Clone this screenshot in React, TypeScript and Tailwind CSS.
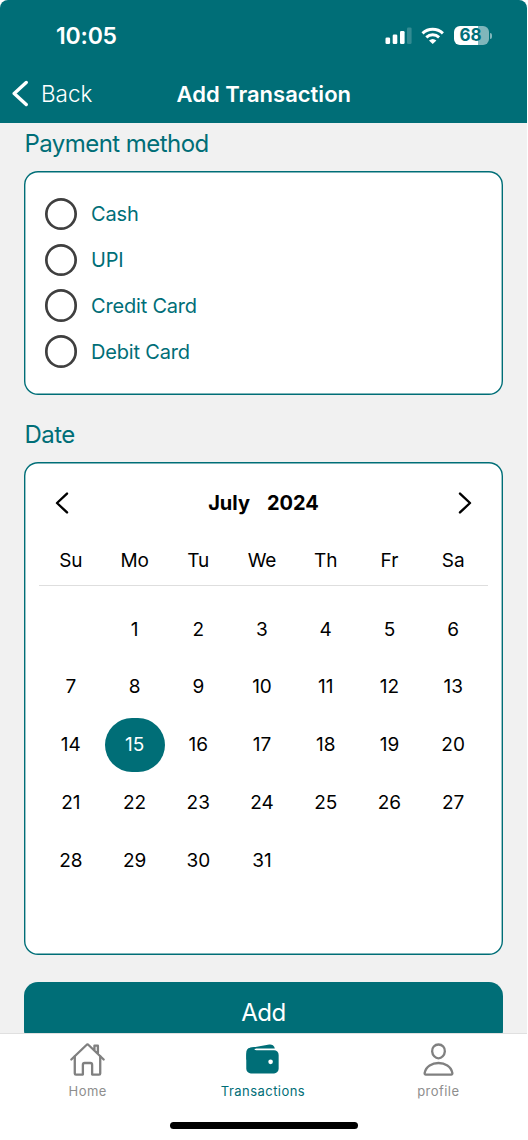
import type { ReactNode } from "react";
import { IoHomeOutline, IoPersonOutline, IoWallet } from "react-icons/io5";

const methods = ["Cash", "UPI", "Credit Card", "Debit Card"];
const weekdays = ["Su", "Mo", "Tu", "We", "Th", "Fr", "Sa"];
const days: (number | null)[] = [null, ...Array.from({ length: 31 }, (_, i) => i + 1)];

function StatusBar() {
  return (
    <div className="flex h-[71px] items-center justify-between pl-[56px] pr-[35px]">
      <span className="pt-[2px] text-[23px] font-semibold leading-none tracking-[-0.2px]">10:05</span>
      <div className="flex items-center">
        <svg width="28" height="18" viewBox="0 0 28 18" fill="currentColor">
          <rect x="0.5" y="10.5" width="4.6" height="6.5" rx="1.3" />
          <rect x="7.7" y="7.5" width="4.6" height="9.5" rx="1.3" />
          <rect x="15" y="4" width="4.6" height="13" rx="1.3" />
          <rect x="22" y="0.5" width="4.6" height="16.5" rx="1.3" opacity="0.2" />
        </svg>
        <svg className="ml-[8px]" width="24" height="18" viewBox="0 0 24 18" fill="none" stroke="currentColor" strokeWidth="3">
          <path d="M1.5 6.3a15 15 0 0 1 20.4 0" />
          <path d="M5.3 10.3a9.6 9.6 0 0 1 12.8 0" />
          <path d="M11.7 17 8 13.6a5.6 5.6 0 0 1 7.4 0z" fill="currentColor" stroke="none" />
        </svg>
        <div className="ml-[9px] flex h-[19px] w-[35px] items-center rounded-[6px] bg-linear-to-r from-white from-68% to-[#80b6bb] to-68% pl-[5.5px]">
          <span className="text-[17px] font-bold leading-none text-[#006e77]">68</span>
        </div>
        <div className="ml-[1px] h-[6px] w-[2px] rounded-r-full bg-[#80b6bb]" />
      </div>
    </div>
  );
}

function Chevron({ flipped = false }: { flipped?: boolean }) {
  return (
    <svg className={flipped ? "rotate-180" : ""} width="14" height="22" viewBox="0 0 14 22" fill="none" stroke="#000" strokeWidth="2.4" strokeLinecap="round" strokeLinejoin="round">
      <path d="M12 1.6 2 11l10 9.4" />
    </svg>
  );
}

function Tab({ icon, label, color, text }: { icon: ReactNode; label: string; color: string; text: string }) {
  return (
    <div className={`flex flex-1 flex-col items-center ${color}`}>
      {icon}
      <span className={`mt-[5px] text-[13px] leading-4 tracking-[0.45px] ${text}`}>{label}</span>
    </div>
  );
}

export default function App() {
  return (
    <div className="h-[1140px] w-[528px] bg-white">
      <div className="flex h-full w-[527px] flex-col overflow-hidden bg-white font-['Inter',sans-serif]">
        <header className="h-[123px] shrink-0 rounded-t-[8px] bg-[#006e77] text-white">
          <StatusBar />
          <div className="flex h-[45px] items-center">
            <div className="flex w-[176.5px] items-center pl-[12px]">
              <svg width="17" height="28" viewBox="0 0 17 28" fill="none" stroke="currentColor" strokeWidth="3.4" strokeLinecap="round" strokeLinejoin="round">
                <path d="M14.2 2.5 2.2 13.5l12 11" />
              </svg>
              <span className="ml-[12px] text-[22.5px] font-light leading-7">Back</span>
            </div>
            <h1 className="text-[22px] font-semibold leading-7">Add Transaction</h1>
          </div>
        </header>

        <main className="min-h-0 flex-1 overflow-hidden bg-[#f1f1f1] px-[24px] pt-[4.5px] text-[#006e77]">
          <h2 className="pl-[0.5px] text-[24px] leading-8 tracking-[-0.55px]">Payment method</h2>
          <section className="mt-[11.5px] flex h-[224px] flex-col rounded-[14px] bg-white pl-[20.5px] pt-[20px] shadow-[inset_0_0_0_1.4px_#006e77]">
            {methods.map((m) => (
              <label key={m} className="flex h-[45.9px] items-center">
                <span className="size-[32.6px] rounded-full shadow-[inset_0_0_0_2.7px_#3f3f3f]" />
                <span className="ml-[14px] text-[20px] leading-6 tracking-[-0.2px]">{m}</span>
              </label>
            ))}
          </section>

          <h2 className="mt-[24px] pl-[0.5px] text-[24px] leading-8 tracking-[-0.55px]">Date</h2>
          <section className="mt-[11px] h-[493px] rounded-[14px] bg-white px-[15px] pt-px text-black shadow-[inset_0_0_0_1.4px_#006e77]">
            <div className="flex h-[79px] items-center justify-between px-[16px]">
              <Chevron />
              <div className="flex gap-[17px] text-[20px] font-bold">
                <span>July</span>
                <span>2024</span>
              </div>
              <Chevron flipped />
            </div>
            <div className="grid h-[44px] grid-cols-7 border-b border-[#dedede] pr-[3px] pt-[7px] text-center text-[19px] leading-6 tracking-[-0.1px]">
              {weekdays.map((d) => (
                <span key={d}>{d}</span>
              ))}
            </div>
            <div className="mt-[15px] grid grid-cols-7 auto-rows-[57.8px] place-items-center pr-[3px] text-[19px]">
              {days.map((d, i) => (
                <span
                  key={i}
                  className={
                    d === 15
                      ? "flex h-[54px] w-[60px] items-center justify-center rounded-[27px] bg-[#006e77] text-white"
                      : "text-center"
                  }
                >
                  {d}
                </span>
              ))}
            </div>
          </section>

          <button className="mt-[27px] block h-[62px] w-full rounded-[14px] bg-[#006e77] text-[24px] leading-8 tracking-[-0.5px] text-white">Add</button>
        </main>

        <nav className="flex h-[107px] shrink-0 flex-col items-center border-t border-[#e0e0e0] bg-white">
          <div className="flex h-[92px] w-full pr-px pt-[7px]">
            <Tab icon={<IoHomeOutline size={37} />} label="Home" color="text-[#808080]" text="text-[#8e8e8e]" />
            <Tab icon={<IoWallet size={37} />} label="Transactions" color="text-[#006e77]" text="text-[#006e77]" />
            <Tab icon={<IoPersonOutline size={37} />} label="profile" color="text-[#808080]" text="text-[#8e8e8e]" />
          </div>
          <div className="mt-[-4px] h-[7px] w-[188px] rounded-full bg-black" />
        </nav>
      </div>
    </div>
  );
}
